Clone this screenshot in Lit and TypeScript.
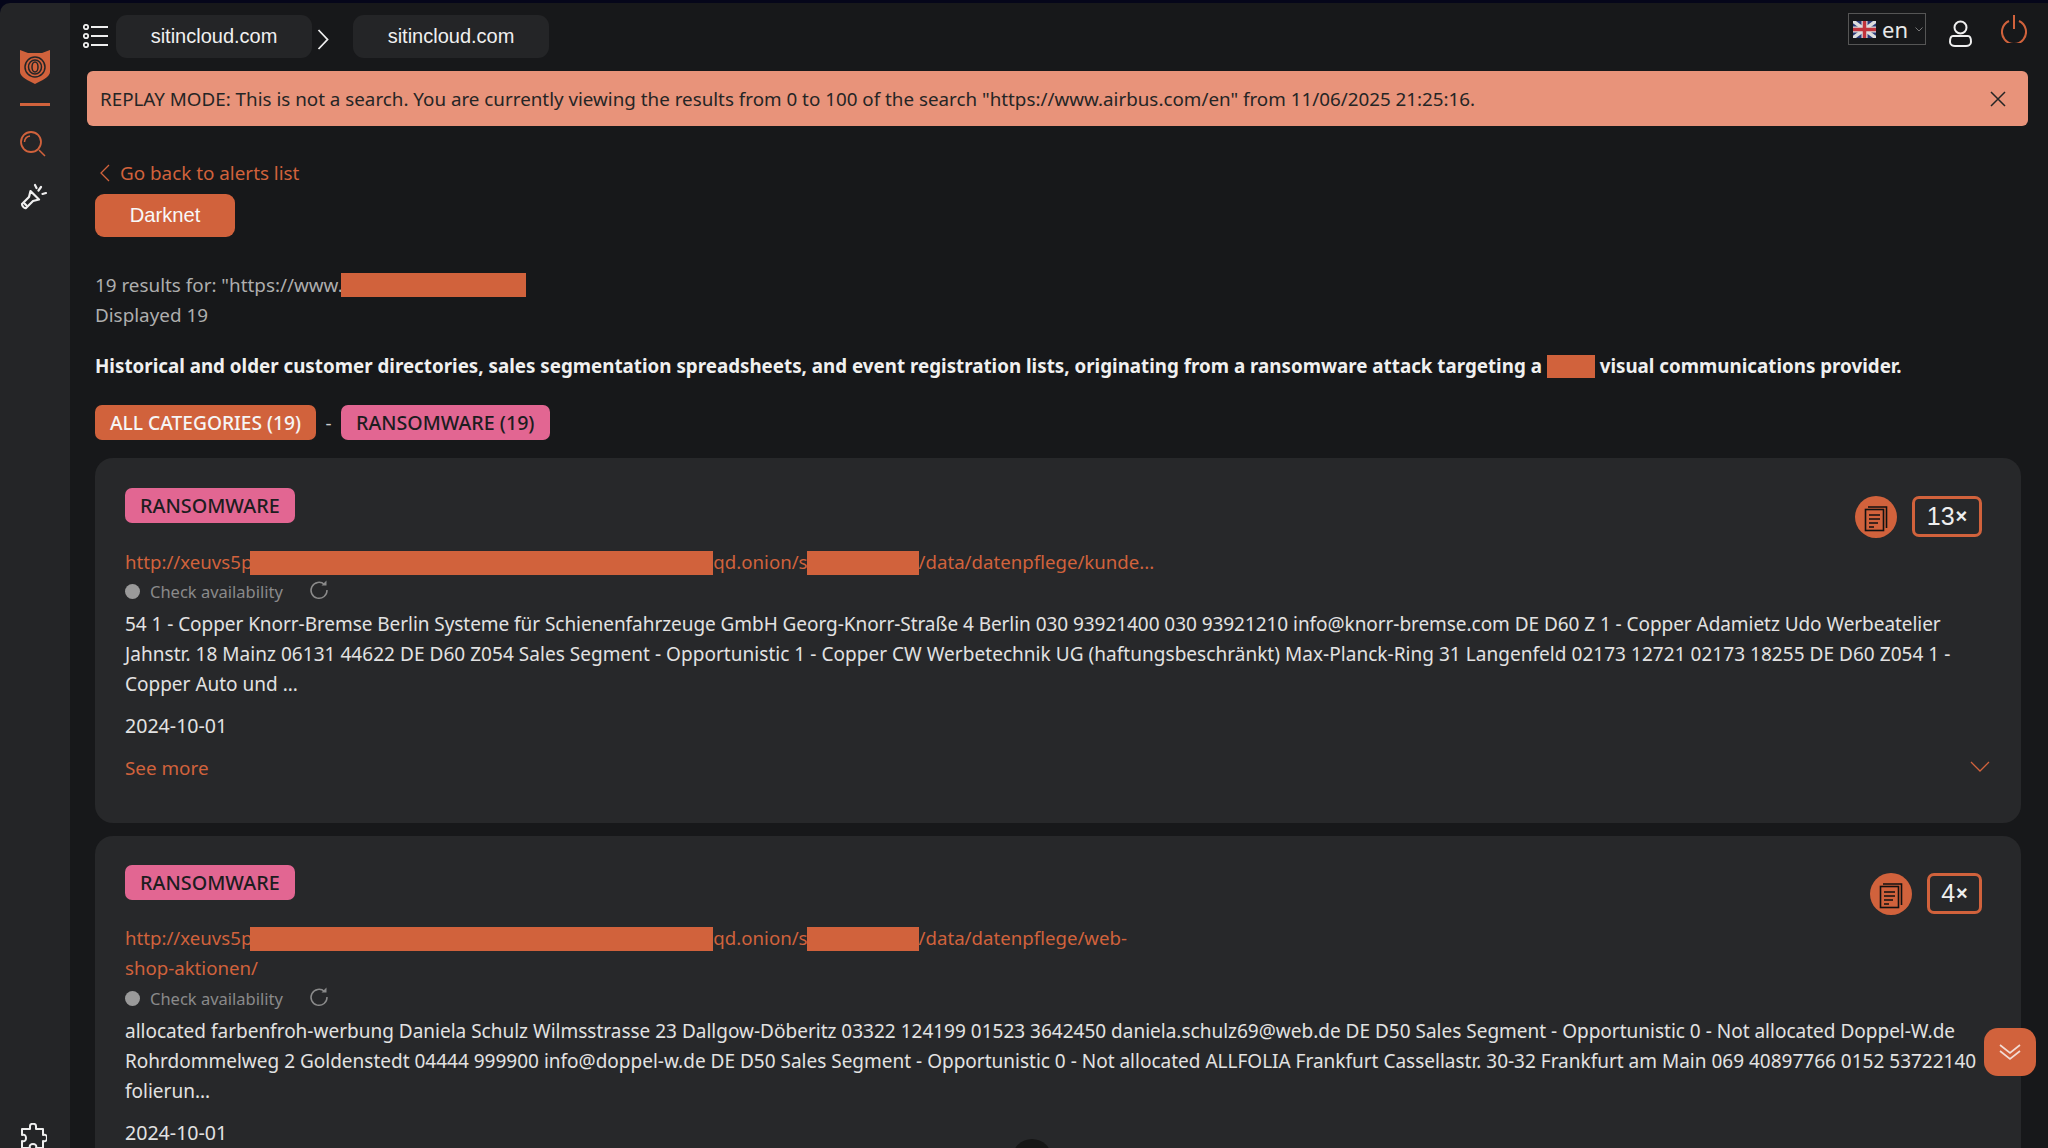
import { LitElement, html, css } from "lit";
import { customElement } from "lit/decorators.js";

const docIcon = html`<svg viewBox="0 0 42 42" width="42" height="42"><circle cx="21" cy="21" r="21" fill="#d1623c"/><g fill="none" stroke="#111" stroke-width="1.6"><rect x="10.5" y="13.5" width="18" height="21"/><path d="M13 11h18.500v21"/><path d="M14 19h11M14 23h11M14 27h9M14 31h5"/></g></svg>`;
const refresh = html`<svg class="refresh" viewBox="0 0 20 20" width="20" height="20"><path d="M15.500 4.500A8 8 0 1 0 18 10" fill="none" stroke="#8a8a8a" stroke-width="1.500"/><path d="M12.500 5.500h5v-5z" fill="#8a8a8a"/></svg>`;

@customElement("app-root")
export class AppRoot extends LitElement {
  static styles = css`
    :host { display: block; height: 1148px; overflow: hidden; background: #05061a; font-family: "Noto Sans", "Open Sans", sans-serif; color: #e0e0e0; }
    * { box-sizing: border-box; }
    .frame { display: flex; height: 1148px; padding-top: 3px; position: relative; font-size: 18.850px; }
    .side { width: 70px; flex: none; background: #242527; border-top-left-radius: 10px; display: flex; flex-direction: column; align-items: flex-start; padding: 47px 0 0 20px; position: relative; }
    .rule { width: 30px; height: 3px; background: #d1623c; margin: 19px 0 25px; }
    .flash { margin-top: 25px; }
    .puzzle { position: absolute; left: 19px; top: 1120px; }
    .main { flex: 1; min-width: 0; background: #17181a; display: flex; flex-direction: column; }
    .top { height: 68px; display: flex; align-items: flex-start; padding: 12px 0 0 13px; position: relative; }
    .listicon { margin: 9px 8px 0 0; }
    .crumb { width: 196px; height: 43px; border-radius: 11px; background: #242527; color: #f0f0f0; font: 20px "Liberation Sans", sans-serif; display: flex; align-items: center; justify-content: center; }
    .sep { width: 41px; display: flex; justify-content: flex-start; padding: 14px 0 0 5px; }
    .tools { margin-left: auto; display: flex; align-items: flex-start; padding-right: 21px; }
    .lang { width: 78px; height: 32px; margin-top: -2px; border: 1px solid #555; display: flex; align-items: center; padding-left: 4px; font-size: 22px; color: #e8e8e8; gap: 6px; }
    .lang .cv { margin-left: 1px; }
    .user { margin: 5px 29px 0 23px; }
    .banner { margin: 0 20px 0 17px; height: 55px; border-radius: 6px; background: #e8937a; color: #252525; display: flex; align-items: center; padding: 0 22px 0 13px; justify-content: space-between; font-size: 18.810px; }
    .content { padding: 0 27px 0 25px; flex: 1; min-height: 0; }
    .back { display: flex; align-items: center; gap: 10px; margin-top: 35px; height: 24px; color: #d1623c; margin-left: 5px; }
    .darknet { margin-top: 9px; width: 140px; height: 43px; border-radius: 9px; background: #d1623c; color: #f8f8f8; font: 20.200px "Liberation Sans", sans-serif; display: flex; align-items: center; justify-content: center; }
    .muted { color: #aeaeae; line-height: 30px; }
    .results { margin-top: 33px; }
    .red { display: inline-block; background: #d1623c; vertical-align: middle; position: relative; }
    .r1 { width: 185px; height: 24px; margin-top: -4px; margin-left: -2px; }
    .summary { margin-top: 21px; font-weight: 700; color: #f0f0f0; line-height: 30px; white-space: nowrap; font-size: 18.770px; }
    .r2 { width: 48px; height: 23px; margin: -2px 0 0 0; }
    .tabs { display: flex; align-items: center; margin-top: 24px; height: 35px; }
    .tab { height: 35px; border-radius: 7px; display: flex; align-items: center; padding: 0 15px; font-weight: 500; }
    .orange { background: #d1623c; color: #f5f5f5; font-size: 19.200px; }
    .pink { background: #e26692; color: #1d1d1f; font-size: 19.650px; }
    .dash { width: 25px; text-align: center; color: #ccc; }
    .card { background: #27282a; border-radius: 18px; padding: 30px 39px 0 30px; height: 365px; margin-top: 18px; position: relative; }
    .card.second { margin-top: 13px; height: 420px; padding-top: 29px; }
    .rowhead { display: flex; justify-content: space-between; align-items: flex-start; height: 35px; }
    .tag { display: inline-flex; height: 35px; align-items: center; padding: 0 15px; background: #e26692; color: #1d1d1f; border-radius: 7px; font-weight: 500; font-size: 19.800px; }
    .act { display: flex; gap: 15px; margin-top: 8px; }
    .count { height: 41px; border: 3px solid #d1623c; border-radius: 7px; display: flex; align-items: center; justify-content: center; font: 25px "Liberation Sans", sans-serif; color: #eee; }
    .count b { font-size: 20px; margin-left: 1px; }
    .c13 { width: 70px; } .c4 { width: 55px; }
    .url { color: #d1623c; line-height: 30px; margin-top: 24px; width: 1040px; font-size: 18.650px; }
    .second .url { margin-top: 23px; }
    .r3 { width: 463px; height: 24px; margin-top: -3px; margin-left: -2px; }
    .r4 { width: 112px; height: 24px; margin-top: -3px; margin-left: -1px; }
    .avail { display: flex; align-items: center; height: 30px; margin-top: -1px; color: #8a8a8a; font-size: 16.500px; }
    .second .avail { margin-top: 0; }
    .dot { width: 15px; height: 15px; border-radius: 50%; background: #9a9a9a; margin-right: 10px; }
    .refresh { margin-left: 26px; margin-top: -2px; }
    .body { line-height: 30px; color: #e2e2e2; white-space: nowrap; margin-top: 3px; font-size: 19px; }
    .second .body { margin-top: 3px; }
    .body div { height: 30px; }
    .body .tight { letter-spacing: -0.055px; }
    .body .loose { letter-spacing: 0.04px; }
    .date { margin-top: 12px; line-height: 30px; color: #e2e2e2; font-size: 19.600px; }
    .more { display: flex; justify-content: space-between; margin-top: 12px; line-height: 30px; color: #d1623c; align-items: center; margin-right: -8px; }
    .more svg { margin-top: -3px; }
    .fab { position: absolute; left: 1984px; top: 1028px; width: 52px; height: 48px; border-radius: 14px; background: #d1623c; display: flex; align-items: center; justify-content: center; }
    .half { position: absolute; left: 1012px; top: 1139px; width: 40px; height: 40px; border-radius: 50%; background: #161616; }
  `;

  card(second: boolean) {
    return html`
      <div class="card ${second ? "second" : ""}">
        <div class="rowhead">
          <span class="tag">RANSOMWARE</span>
          <div class="act">${docIcon}<div class="count ${second ? "c4" : "c13"}">${second ? "4" : "13"}<b>×</b></div></div>
        </div>
        <div class="url">http://xeuvs5p<span class="red r3"></span>qd.onion/s<span class="red r4"></span>${second ? "/data/datenpflege/web-shop-aktionen/" : "/data/datenpflege/kunde..."}</div>
        <div class="avail"><span class="dot"></span>Check availability${refresh}</div>
        <div class="body">
          ${second
            ? html`<div>allocated farbenfroh-werbung Daniela Schulz Wilmsstrasse 23 Dallgow-Döberitz 03322 124199 01523 3642450 daniela.schulz69@web.de DE D50 Sales Segment - Opportunistic 0 - Not allocated Doppel-W.de</div>
                <div>Rohrdommelweg 2 Goldenstedt 04444 999900 info@doppel-w.de DE D50 Sales Segment - Opportunistic 0 - Not allocated ALLFOLIA Frankfurt Cassellastr. 30-32 Frankfurt am Main 069 40897766 0152 53722140</div>
                <div>folierun...</div>`
            : html`<div class="tight">54 1 - Copper Knorr-Bremse Berlin Systeme für Schienenfahrzeuge GmbH Georg-Knorr-Straße 4 Berlin 030 93921400 030 93921210 info@knorr-bremse.com DE D60 Z 1 - Copper Adamietz Udo Werbeatelier</div>
                <div class="loose">Jahnstr. 18 Mainz 06131 44622 DE D60 Z054 Sales Segment - Opportunistic 1 - Copper CW Werbetechnik UG (haftungsbeschränkt) Max-Planck-Ring 31 Langenfeld 02173 12721 02173 18255 DE D60 Z054 1 -</div>
                <div>Copper Auto und ...</div>`}
        </div>
        <div class="date">2024-10-01</div>
        ${second ? "" : html`<div class="more"><span>See more</span><svg width="20" height="12" viewBox="0 0 20 12"><path d="M1 1l9 9 9-9" fill="none" stroke="#d1623c" stroke-width="1.300"/></svg></div>`}
      </div>`;
  }

  render() {
    return html`
      <div class="frame">
        <aside class="side">
          <svg width="30" height="34" viewBox="0 0 30 34">
            <path d="M0 0l8 3h14l8-3v22c0 5-9 9-15 12C9 31 0 27 0 22z" fill="#d1623c"/>
            <g fill="none" stroke="#242527" stroke-width="1.500"><ellipse cx="15" cy="17" rx="10" ry="10"/><ellipse cx="15" cy="17" rx="6.500" ry="7"/><ellipse cx="15" cy="17" rx="3" ry="5"/></g>
          </svg>
          <div class="rule"></div>
          <svg width="26" height="26" viewBox="0 0 26 26"><circle cx="11" cy="11" r="10" fill="none" stroke="#d1623c" stroke-width="1.800"/><path d="M4.500 11A6.500 6.500 0 0 1 10 5M19 19l6 6" fill="none" stroke="#d1623c" stroke-width="1.500"/></svg>
          <svg class="flash" width="27" height="28" viewBox="0 0 27 28"><g fill="none" stroke="#f0f0f0" stroke-width="2.200" stroke-linecap="round" stroke-linejoin="round"><path d="M2 22l7-7 1.500-6 8.500 8.500-6 1.500-7 7c-1.500 1-4-2-4-4z"/><path d="M4.500 21.500l2 2M15 3l1.500 3M21 5l-2.500 3.500M26 11l-3.500 1"/></g></svg>
          <svg class="puzzle" width="28" height="28" viewBox="0 0 28 28"><path d="M11 3c0-3 6-3 6 0v3h7v6c3-1 4 1 4 3s-1 4-4 3v7h-7c1-3-1-4-3-4s-4 1-3 4H3v-7c3 1 4-1 4-3s-1-4-4-3V6h8z" fill="none" stroke="#eee" stroke-width="2" stroke-linejoin="round"/></svg>
        </aside>
        <main class="main">
          <header class="top">
            <svg class="listicon" width="25" height="24" viewBox="0 0 25 24"><g fill="none" stroke="#eee" stroke-width="1.800"><circle cx="3" cy="3" r="2.200"/><circle cx="3" cy="12" r="2.200"/><circle cx="3" cy="21" r="2.200"/><path d="M8 3h17M8 12h17M8 21h17"/></g></svg>
            <div class="crumb">sitincloud.com</div>
            <div class="sep"><svg width="12" height="21" viewBox="0 0 12 21"><path d="M1.500 1l9 9.500-9 9.500" fill="none" stroke="#eee" stroke-width="1.800"/></svg></div>
            <div class="crumb">sitincloud.com</div>
            <div class="tools">
              <div class="lang">
                <svg width="23" height="17" viewBox="0 0 23 17"><rect width="23" height="17" fill="#2a3a78"/><path d="M0 0l23 17M23 0L0 17" stroke="#ddd" stroke-width="3.500"/><path d="M11.500 0v17M0 8.500h23" stroke="#ddd" stroke-width="6"/><path d="M11.500 0v17M0 8.500h23" stroke="#c0333c" stroke-width="3.500"/></svg>
                <span>en</span>
                <svg class="cv" width="8" height="5" viewBox="0 0 8 5"><path d="M.5.500L4 4 7.500.500" fill="none" stroke="#777"/></svg>
              </div>
              <svg class="user" width="23" height="27" viewBox="0 0 23 27"><g fill="none" stroke="#f0f0f0" stroke-width="2"><circle cx="11.500" cy="7.500" r="6"/><path d="M4 16h15c3 0 3 4 3 6 0 3-3 4-5 4H6c-2 0-5-1-5-4 0-2 0-6 3-6z"/></g></svg>
              <svg width="26" height="28" viewBox="0 0 26 28"><g fill="none" stroke="#d1623c" stroke-width="2"><path d="M8 6a12 12 0 1 0 10 0M13 0v14"/></g></svg>
            </div>
          </header>
          <div class="banner">
            <span>REPLAY MODE: This is not a search. You are currently viewing the results from 0 to 100 of the search "https://www.airbus.com/en" from 11/06/2025 21:25:16.</span>
            <svg width="16" height="16" viewBox="0 0 16 16"><path d="M1 1l14 14M15 1L1 15" stroke="#252525" stroke-width="1.500"/></svg>
          </div>
          <section class="content">
            <div class="back"><svg width="10" height="18" viewBox="0 0 10 18"><path d="M9 1L1 9l8 8" fill="none" stroke="#d1623c" stroke-width="1.300"/></svg><span>Go back to alerts list</span></div>
            <div class="darknet">Darknet</div>
            <div class="muted results">19 results for: "https://www.<span class="red r1"></span></div>
            <div class="muted">Displayed 19</div>
            <div class="summary">Historical and older customer directories, sales segmentation spreadsheets, and event registration lists, originating from a ransomware attack targeting a <span class="red r2"></span> visual communications provider.</div>
            <div class="tabs"><div class="tab orange">ALL CATEGORIES (19)</div><span class="dash">-</span><div class="tab pink">RANSOMWARE (19)</div></div>
            ${this.card(false)}
            ${this.card(true)}
          </section>
        </main>
        <div class="half"></div>
        <div class="fab"><svg width="24" height="20" viewBox="0 0 24 20"><path d="M2 3l10 8 10-8M2 9l10 8 10-8" fill="none" stroke="#f2dcd4" stroke-width="1.700"/></svg></div>
      </div>
    `;
  }
}
